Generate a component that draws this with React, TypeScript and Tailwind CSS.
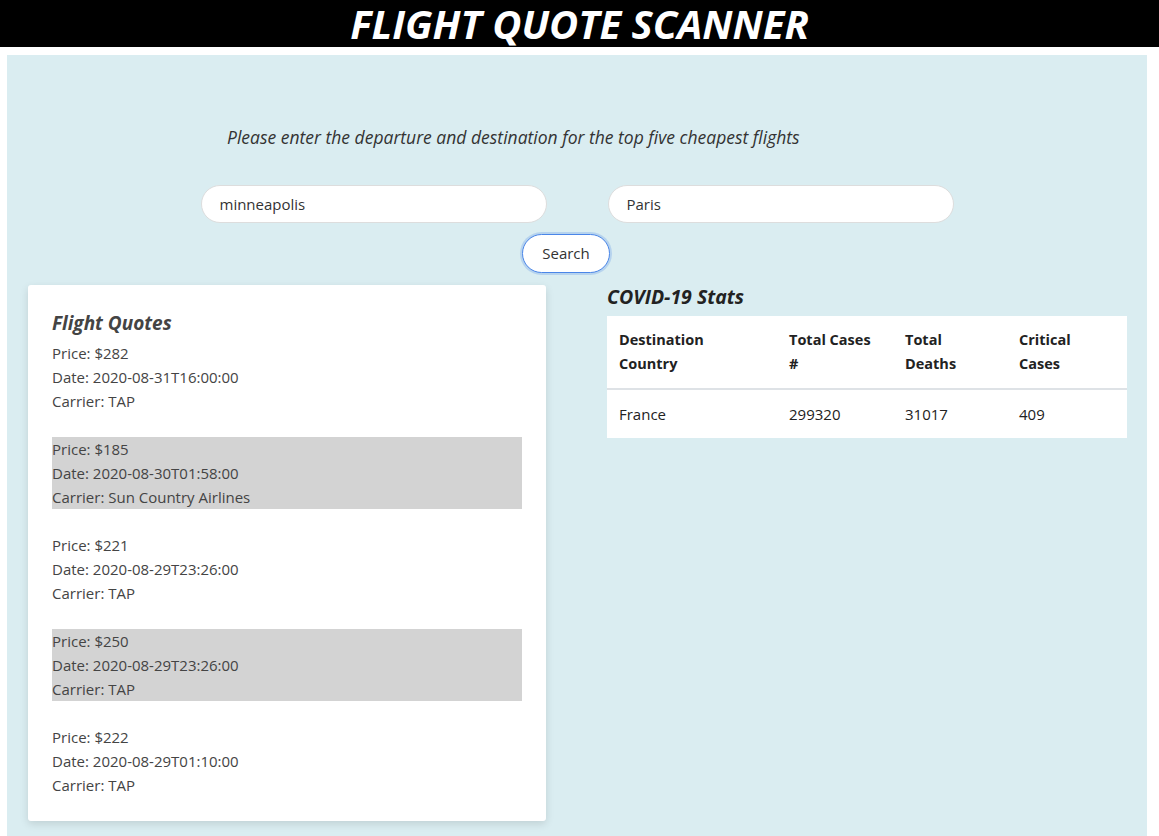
import React from "react";

type Quote = {
  price: number;
  date: string;
  carrier: string;
};

const quotes: Quote[] = [
  { price: 282, date: "2020-08-31T16:00:00", carrier: "TAP" },
  { price: 185, date: "2020-08-30T01:58:00", carrier: "Sun Country Airlines" },
  { price: 221, date: "2020-08-29T23:26:00", carrier: "TAP" },
  { price: 250, date: "2020-08-29T23:26:00", carrier: "TAP" },
  { price: 222, date: "2020-08-29T01:10:00", carrier: "TAP" },
];

const App: React.FC = () => {
  return (
    <div className="min-h-screen bg-white font-['Open_Sans',sans-serif] text-[#333]">
      {/* Header */}
      <header className="h-[47px] bg-black flex justify-center">
        <h1 className="text-white text-[40px] font-bold italic leading-[47px]">
          FLIGHT QUOTE SCANNER
        </h1>
      </header>

      {/* Main panel */}
      <main className="ml-[7px] mt-[8px] w-[1140px] bg-[#daedf1] pt-[70px] pb-[20px]">
        <p className="pl-[220px] text-[17.5px] leading-6 italic text-[#333]">
          Please enter the departure and destination for the top five cheapest flights
        </p>

        {/* Inputs */}
        <div className="mt-[36px] flex justify-center gap-[61px]">
          <input
            defaultValue="minneapolis"
            className="w-[346px] h-[38px] rounded-full border border-[#ddd] bg-white px-[18px] text-[15px] text-[#333] outline-none"
          />
          <input
            defaultValue="Paris"
            className="w-[346px] h-[38px] rounded-full border border-[#ddd] bg-white px-[18px] text-[15px] text-[#333] outline-none"
          />
        </div>

        <div className="mt-[11px] pl-[515px]">
          <button className="w-[88px] h-[39px] rounded-full bg-white border border-[#4a86e8] shadow-[0_0_0_2px_rgba(74,134,232,0.25)] text-[15px] text-[#333]">
            Search
          </button>
        </div>

        {/* Results */}
        <div className="mt-[12px] flex items-start pl-[21px] gap-[61px]">
          <section className="w-[518px] bg-white rounded-[3px] shadow-[0_3px_8px_rgba(0,0,0,0.12)] p-[24px]">
            <h2 className="text-[19px] leading-[28px] font-bold italic text-[#444] mb-[4px]">
              Flight Quotes
            </h2>
            <div className="flex flex-col gap-[24px]">
              {quotes.map((q, i) => (
                <div
                  key={i}
                  className={`text-[15px] leading-6 text-[#444] ${i % 2 === 1 ? "bg-[#d3d3d3]" : ""}`}
                >
                  <div>Price: ${q.price}</div>
                  <div>Date: {q.date}</div>
                  <div>Carrier: {q.carrier}</div>
                </div>
              ))}
            </div>
          </section>

          <section className="w-[520px]">
            <h2 className="text-[19.5px] leading-[24px] font-bold italic text-[#222] mb-[7px]">
              COVID-19 Stats
            </h2>
            <table className="w-full bg-white leading-6 text-[#222] border-collapse">
              <thead>
                <tr className="border-b-2 border-[#dee2e6] text-left text-[14.5px]">
                  <th className="w-[170px] p-[12px] align-top font-bold">Destination Country</th>
                  <th className="w-[116px] p-[12px] align-top font-bold">Total Cases #</th>
                  <th className="w-[114px] p-[12px] align-top font-bold">Total Deaths</th>
                  <th className="p-[12px] align-top font-bold">Critical Cases</th>
                </tr>
              </thead>
              <tbody className="text-[15px]">
                <tr>
                  <td className="p-[12px]">France</td>
                  <td className="p-[12px]">299320</td>
                  <td className="p-[12px]">31017</td>
                  <td className="p-[12px]">409</td>
                </tr>
              </tbody>
            </table>
          </section>
        </div>
      </main>
    </div>
  );
};

export default App;
